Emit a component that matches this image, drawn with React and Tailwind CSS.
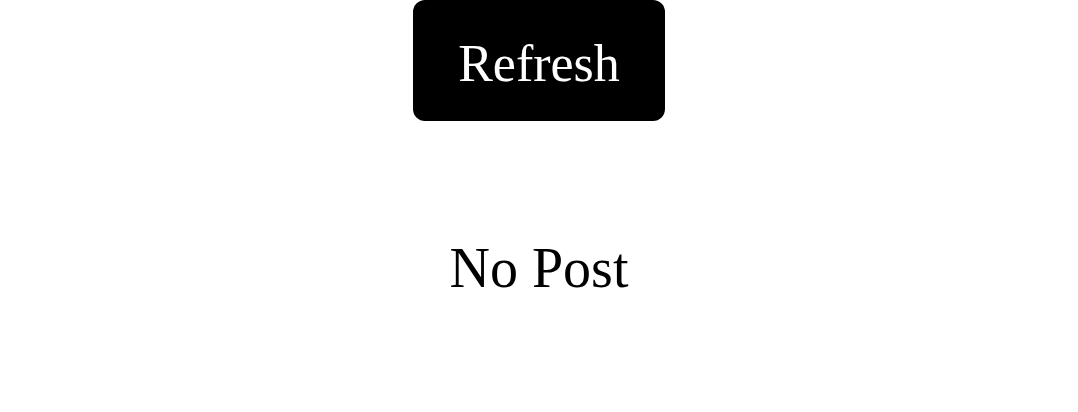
export default function App() {
  return (
    <div className="min-h-[412px] bg-white flex flex-col items-center" style={{ fontFamily: '"Liberation Serif", serif' }}>
      <button
        type="button"
        className="w-[252px] h-[121px] rounded-[12px] bg-black text-white text-[52px] leading-none flex items-center justify-center pt-[6px]"
      >
        Refresh
      </button>
      <p className="mt-[119px] text-[56px] leading-none text-black">No Post</p>
    </div>
  )
}
